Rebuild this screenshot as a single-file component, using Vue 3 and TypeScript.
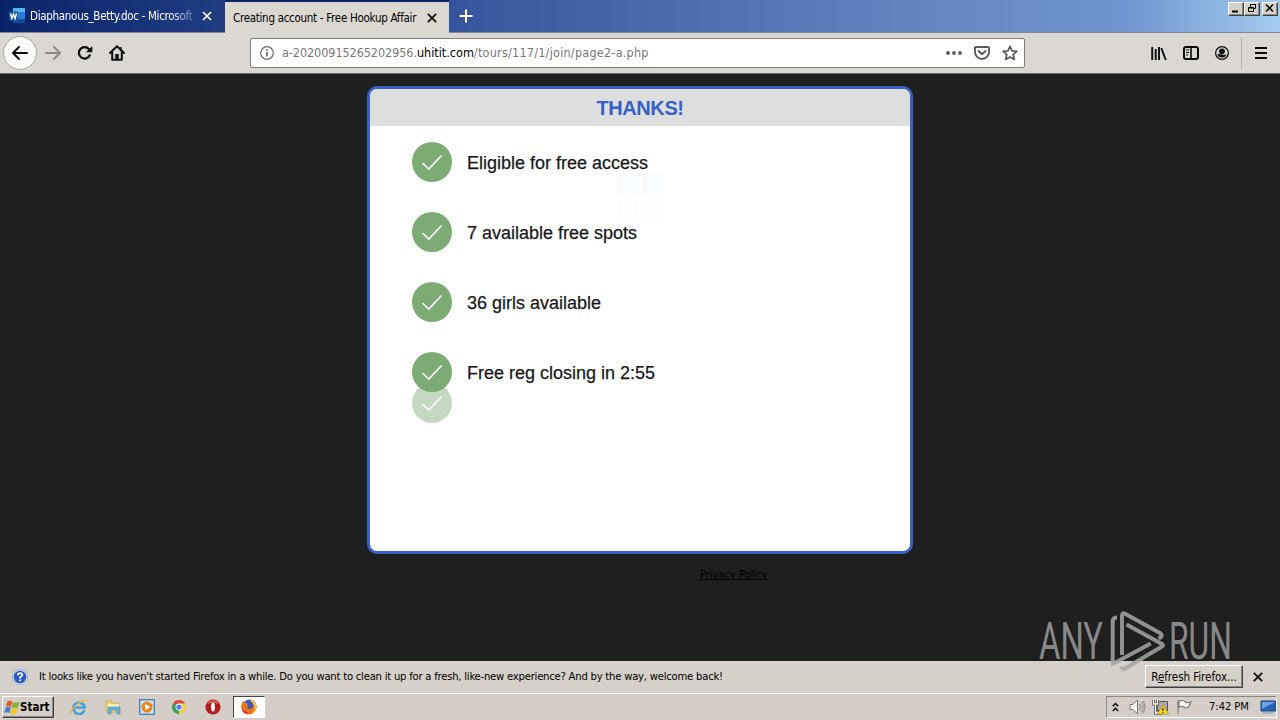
<script setup lang="ts">
interface Row { text: string }
const rows: Row[] = [
  { text: 'Eligible for free access' },
  { text: '7 available free spots' },
  { text: '36 girls available' },
  { text: 'Free reg closing in 2:55' },
]
</script>

<template>
  <div class="screen">
    <header class="tabs">
      <div class="tab inactive">
        <svg class="word" width="16" height="16" viewBox="0 0 16 16">
          <rect x="4" y="0" width="12" height="15" rx="1" fill="#2b7cd3" />
          <rect x="4" y="0" width="12" height="4" fill="#56b5ef" />
          <rect x="4" y="11" width="12" height="4" fill="#174a96" />
          <rect x="0" y="3.500" width="9" height="9" rx="1" fill="#1955a8" />
          <path d="M1.500 5.500l1.400 5L4.500 6l1.600 4.500L7.500 5.500" fill="none" stroke="#fff" stroke-width="1.400" />
        </svg>
        <span class="ui tab-title first">Diaphanous_Betty.doc - Microsoft</span>
        <svg class="x1" width="10" height="10" viewBox="0 0 10 10"><path d="M1 1l8 8M9 1L1 9" stroke="#fff" stroke-width="1.700" /></svg>
      </div>
      <div class="tab active">
        <span class="ui tab-title second">Creating account - Free Hookup Affair</span>
        <svg class="x2" width="10" height="10" viewBox="0 0 10 10"><path d="M.8 .8l8.400 8.400M9.200 .8L.8 9.200" stroke="#111" stroke-width="1.800" /></svg>
      </div>
      <svg class="plus" width="14" height="14" viewBox="0 0 14 14"><path d="M7 .5v13M.5 7h13" stroke="#fff" stroke-width="2" /></svg>
      <div class="win-buttons">
        <span class="wb"><svg width="13" height="11"><path d="M3 8.500h6" stroke="#000" stroke-width="2" /></svg></span>
        <span class="wb"><svg width="13" height="11"><path d="M5.500 4V1.500h5v4H9M5 1.500h6M3.500 4.500h5v4h-5zM3 5h6" fill="none" stroke="#000" /></svg></span>
        <span class="wb last"><svg width="13" height="11"><path d="M3 1.500l7 7M10 1.500l-7 7" stroke="#000" stroke-width="1.500" /></svg></span>
      </div>
    </header>

    <nav class="toolbar">
      <span class="back"><svg width="18" height="16" viewBox="0 0 18 16"><path d="M16 8H2M8 2L2 8l6 6" fill="none" stroke="#0c0c0d" stroke-width="2" stroke-linecap="round" stroke-linejoin="round" /></svg></span>
      <svg class="fwd" width="18" height="16" viewBox="0 0 18 16"><path d="M2 8h14M10 2l6 6-6 6" fill="none" stroke="#8c8a87" stroke-width="2" stroke-linecap="round" stroke-linejoin="round" /></svg>
      <svg class="reload" width="16" height="16" viewBox="0 0 16 16"><path d="M12.800 10.300A5.700 5.700 0 1 1 12 4.200" fill="none" stroke="#0c0c0d" stroke-width="2.200" stroke-linecap="round" /><path d="M15.300 1v6.200H9z" fill="#0c0c0d" /></svg>
      <svg class="home" width="16" height="16" viewBox="0 0 16 16"><path d="M1 8l7-6.800L15 8" fill="none" stroke="#0c0c0d" stroke-width="2" stroke-linecap="round" stroke-linejoin="round" /><path d="M3.200 7v7.800h9.600V7" fill="none" stroke="#0c0c0d" stroke-width="2" stroke-linejoin="round" /><path d="M6.300 15V9h3.400v6z" fill="#0c0c0d" /><path d="M12 2v3" stroke="#0c0c0d" stroke-width="1.500" /></svg>
      <div class="urlbar">
        <svg width="14" height="14" viewBox="0 0 14 14"><circle cx="7" cy="7" r="6.300" fill="none" stroke="#6b6b6b" stroke-width="1.200" /><path d="M7 6v4.500M7 3.300v1.500" stroke="#6b6b6b" stroke-width="1.700" /></svg>
        <span class="ui url"><span class="sub">a-20200915265202956.</span><b>uhitit.com</b><span class="path">/tours/117/1/join/page2-a.php</span></span>
        <svg class="dots" width="16" height="4" viewBox="0 0 16 4"><circle cx="2" cy="2" r="1.900" fill="#5b5b5e" /><circle cx="8" cy="2" r="1.900" fill="#5b5b5e" /><circle cx="14" cy="2" r="1.900" fill="#5b5b5e" /></svg>
        <svg class="pocket" width="16" height="14" viewBox="0 0 16 14"><path d="M2 1h12q1 0 1 1v4a7 7 0 0 1-14 0V2q0-1 1-1z" fill="none" stroke="#5b5b5e" stroke-width="1.900" /><path d="M4.500 5L8 8.300 11.500 5" fill="none" stroke="#5b5b5e" stroke-width="1.900" stroke-linecap="round" stroke-linejoin="round" /></svg>
        <svg class="star" width="16" height="16" viewBox="0 0 16 16"><path d="M8 1.300l2 4.500 4.900.5-3.700 3.300 1.100 4.900L8 12l-4.300 2.500 1.100-4.900L1.100 6.300 6 5.800z" fill="none" stroke="#5b5b5e" stroke-width="1.700" stroke-linejoin="round" /></svg>
      </div>
      <div class="tools">
        <svg width="16" height="15" viewBox="0 0 16 15"><path d="M1.200 1v13M4.700 3v11M8 1v13M10.300 2l4.500 12" fill="none" stroke="#0c0c0d" stroke-width="1.900" /></svg>
        <svg width="16" height="14" viewBox="0 0 16 14"><rect x="1" y="1" width="14" height="12" rx="2" fill="none" stroke="#0c0c0d" stroke-width="2" /><path d="M8 1v12" stroke="#0c0c0d" stroke-width="1.600" /><path d="M3 4h3M3 6.500h3M3 9h2" stroke="#0c0c0d" /></svg>
        <svg width="14" height="14" viewBox="0 0 14 14"><circle cx="7" cy="7" r="6.400" fill="none" stroke="#0c0c0d" stroke-width="1.200" /><circle cx="7" cy="5.300" r="2.900" fill="#0c0c0d" /><path d="M2.300 8.300Q5 7.500 7 8.500t4.700-.2A5 5 0 0 1 2.300 8.300z" fill="#0c0c0d" /></svg>
        <i class="sep"></i>
        <svg class="menu" width="12" height="12" viewBox="0 0 12 12"><path d="M0 1h12M0 6h12M0 11h12" stroke="#0c0c0d" stroke-width="2" /></svg>
      </div>
    </nav>

    <main class="page">
      <section class="card">
        <h1>THANKS!</h1>
        <ul>
          <li v-for="r in rows" :key="r.text">
            <svg class="check" width="40" height="40" viewBox="0 0 40 40"><circle cx="20" cy="20" r="20" fill="#7cab73" /><path d="M10.500 21l6.300 6L29.500 13.500" fill="none" stroke="#fff" stroke-width="1.700" /></svg>
            <span>{{ r.text }}</span>
          </li>
        </ul>
        <svg class="check incoming" width="40" height="40" viewBox="0 0 40 40"><circle cx="20" cy="20" r="20" fill="#c5d8c1" /><path d="M10.500 21l6.300 6L29.500 13.500" fill="none" stroke="#fff" stroke-width="1.700" /></svg>
        <div class="tiles"><i></i><i></i><i></i><i></i></div>
      </section>
      <a class="ui privacy">Privacy Policy</a>
    </main>

    <div class="notice">
      <svg width="16" height="16" viewBox="0 0 16 16"><circle cx="8" cy="8" r="7.700" fill="#d5e0f2" stroke="#8294b8" stroke-width=".6" /><circle cx="8" cy="8" r="6.300" fill="#2857bd" /><path d="M5.800 6.300Q6 4.200 8.100 4.200t2.200 1.900Q10.300 7.200 8.100 8.200v1.200M8.100 10.600v1.700" fill="none" stroke="#fff" stroke-width="1.700" /></svg>
      <span class="ui msg">It looks like you haven't started Firefox in a while. Do you want to clean it up for a fresh, like-new experience? And by the way, welcome back!</span>
      <button class="ui refresh"><span>R<u>e</u>fresh Firefox...</span></button>
      <svg class="nx" width="10" height="10" viewBox="0 0 10 10"><path d="M.8 .8l8.400 8.400M9.200 .8L.8 9.200" stroke="#111" stroke-width="1.800" /></svg>
    </div>

    <footer class="taskbar">
      <div class="start">
        <svg width="16" height="15" viewBox="0 0 16 15"><path d="M3.300 1.500Q6 0 8.300 1.500L7 7Q4.500 5.500 1.900 7z" fill="#e35b24" /><path d="M8.900 2q2.700 1.300 6.600 0L14 7.300q-3.300 1.200-6.400 0z" fill="#7cb63c" /><path d="M1.700 7.600Q4.200 6.200 6.800 7.600L5.500 13Q3 11.700.2 13z" fill="#3e82d2" /><path d="M7.400 7.900q2.900 1.300 6.400.2L12.400 13.400q-3.300 1.200-6.400 0z" fill="#f2c32c" /></svg>
        <b class="ui">Start</b>
      </div>
      <div class="launch">
        <svg width="18" height="16" viewBox="0 0 18 16"><path d="M14.500 11.200A5.700 5.700 0 1 1 14.700 8.500H5" fill="none" stroke="#43a4dc" stroke-width="2.700" /><path d="M1.500 15Q-1 12 7 5.500T17 2.500" fill="none" stroke="#e8bd3d" stroke-width="1.400" /></svg>
        <svg width="17" height="16" viewBox="0 0 17 16"><path d="M1 2h5l1 2h7v9H1z" fill="#edcf70" stroke="#c7a44a" stroke-width=".7" /><path d="M3 5h11v3H3z" fill="#fff0b0" /><path d="M3 15V9q0-1 1-1h10q1 0 1 1v6h-3v-4H6v4z" fill="#68b5dc" stroke="#398db9" stroke-width=".6" /></svg>
        <svg class="player" width="16" height="16" viewBox="0 0 16 16"><rect x=".5" y=".5" width="15" height="15" fill="#8cbde3" stroke="#4c84b6" /><rect x="2" y="2" width="12" height="12" fill="#d3e6f4" /><circle cx="8" cy="8" r="5.600" fill="#ef8418" /><path d="M6.200 4.700L11.300 8l-5.100 3.300z" fill="#fff" /></svg>
        <svg width="14" height="14" viewBox="0 0 14 14"><path d="M7 7L.9 3.500A7 7 0 0 1 13.100 3.500z" fill="#df4938" /><path d="M7 7h.2L7 14A7 7 0 0 1 .9 3.500z" fill="#3ca157" /><path d="M7 7V3.500h6.100A7 7 0 0 1 7 14z" fill="#f5cc3c" /><circle cx="7" cy="7" r="3.400" fill="#fff" /><circle cx="7" cy="7" r="2.600" fill="#4385ed" /></svg>
        <svg class="opera" width="16" height="16" viewBox="0 0 16 16"><circle cx="8" cy="8" r="7.600" fill="#b51b1c" /><path d="M2 5a7 7 0 0 1 12 0Q8 2 2 5z" fill="#e27669" /><ellipse cx="8" cy="8" rx="2.300" ry="5.200" fill="#fff" stroke="#741014" stroke-width=".8" /></svg>
      </div>
      <div class="ff">
        <svg width="16" height="16" viewBox="0 0 16 16"><circle cx="8.500" cy="7.300" r="6.800" fill="#335bc3" /><path d="M1 4l1.500-2 2 2 2-.3-.5 2 2 1-2 1.500q1 3 4 1.500 4-2 1-6.500L8.500.5Q15 1.500 15.700 7.500A7.700 7.700 0 0 1 .4 9Q0 6 1 4z" fill="#f17619" /><path d="M9 .5Q14.500 2 15.500 7.500 15 13 10 15q5-4 3.300-8.500Q11.500 4 9 .5z" fill="#ffc93c" /><path d="M.6 7Q2 13 8 13.300 4 17 1 11z" fill="#e5303e" /></svg>
      </div>
      <div class="tray">
        <svg class="chev" width="7" height="11" viewBox="0 0 7 11"><path d="M.8 4.300L3.500 1.500l2.700 2.800M.8 9L3.500 6.200 6.200 9" fill="none" stroke="#000" stroke-width="1.400" /></svg>
        <svg class="sound" width="17" height="16" viewBox="0 0 17 16"><path d="M1 5.500h3L8.500 1v14L4 10.500H1z" fill="#f5f5f5" stroke="#777" /><path d="M10.500 5q2 3 0 6M12.500 3q3.200 5 0 10M14.500 2q3 6 0 12" fill="none" stroke="#858585" /></svg>
        <svg class="net" width="17" height="16" viewBox="0 0 17 16"><rect x="5.500" y="2.500" width="10" height="9" fill="#aaa9a3" stroke="#555" /><path d="M1.500 1v4h4V1M3.500 5v9h7" fill="none" stroke="#555" stroke-width="3" /><path d="M1.500 1v4h4V1M3.500 5v9h7" fill="none" stroke="#fff" stroke-width="1.300" /><path d="M11 6l5.500 9h-11z" fill="#ffdc32" stroke="#b48c0b" stroke-width=".7" /><path d="M11 9v3M11 13v1" stroke="#222" stroke-width="1.200" /></svg>
        <svg class="flag" width="16" height="16" viewBox="0 0 16 16"><path d="M2 1.500v13M3 2q4-1.500 6.500 1 2 1.500 5.500 0l-2.500 5Q9 9.500 7.500 8T3 8z" fill="#f3f3f3" stroke="#777" stroke-width="1.100" /></svg>
        <span class="ui clock">7:42 PM</span>
        <svg width="16" height="14" viewBox="0 0 16 14"><path d="M1 1h14.500v10H1z" fill="#2463ba" stroke="#234779" /><path d="M2 2h13L2 9z" fill="#6da4e1" /><path d="M3 12.800h10" stroke="#9fb2c7" stroke-width="1.600" /></svg>
      </div>
    </footer>

    <svg class="brand" width="210" height="70" viewBox="0 0 210 70">
      <g fill="#a6a6a6" fill-opacity=".8">
        <text x="3" y="54" font-size="51" textLength="64" lengthAdjust="spacingAndGlyphs">ANY</text>
        <text x="133" y="54" font-size="51" textLength="63" lengthAdjust="spacingAndGlyphs">RUN</text>
      </g>
      <g fill="none" stroke="#a6a6a6" stroke-opacity=".85" stroke-width="4" stroke-linejoin="round">
        <path d="M81 12.500q-4.300 0-4.300 4V59l38-20.500" />
        <path d="M86 50V11q0-4 3.500-2L124 28q3 2 .5 4.500l-2 1" />
        <path d="M90.500 19.500L126 39q2 1 0 2.500L89 63.500q-3 1.500-3-2" />
      </g>
    </svg>
  </div>
</template>

<style>
body { margin: 0; overflow: hidden; }
</style>

<style scoped>
.screen { position: relative; width: 1280px; height: 720px; overflow: hidden; display: flex; flex-direction: column; background: #1f1f1f; font-family: "Liberation Sans", Arial, sans-serif; }
.screen * { box-sizing: border-box; }
svg { display: block; flex: none; }
.ui { font-family: "DejaVu Sans Condensed", "DejaVu Sans", sans-serif; font-stretch: condensed; font-size: 11px; white-space: nowrap; color: #000; line-height: 16px; }
.tabs { height: 33px; flex: none; display: flex; background: linear-gradient(90deg, #0a246a, #35549c 35%, #6283be 70%, #7095ce 88%, #a3caf1); border-bottom: 1px solid #85888d; }
.tab { display: flex; align-items: center; flex: none; }
.inactive { width: 225px; padding-left: 9px; }
.first { width: 164px; margin-left: 5px; overflow: hidden; color: #fff; font-size: 11.500px; letter-spacing: -.3px; -webkit-mask-image: linear-gradient(90deg, #000 85%, rgba(0, 0, 0, .25)); mask-image: linear-gradient(90deg, #000 85%, rgba(0, 0, 0, .25)); }
.x1 { margin-left: 8px; }
.active { width: 224px; height: 33px; background: #dbd8d1; border-top: 2px solid #0a246a; padding-left: 8px; }
.second { width: 186px; font-size: 11.500px; letter-spacing: -.29px; }
.x2 { margin-left: 8px; }
.plus { margin: 9px 0 0 10px; }
.win-buttons { margin: 2px 2px 0 auto; height: 14px; display: flex; }
.wb { width: 16px; height: 14px; background: #d6d2c9; border: 1px solid; border-color: #fff #404040 #404040 #fff; box-shadow: inset -1px -1px #888; }
.last { margin-left: 2px; }
.toolbar { height: 41px; flex: none; display: flex; align-items: center; background: #dbd8d3; border-bottom: 1px solid #77756f; }
.back { width: 34px; height: 34px; margin-left: 3px; border: 1px solid #aaa8a3; border-radius: 50%; background: #fafaf9; display: flex; align-items: center; justify-content: center; }
.fwd { margin-left: 7px; }
.reload { margin-left: 15px; }
.home { margin-left: 16px; }
.urlbar { width: 775px; height: 30px; margin-left: 125px; padding-left: 9px; display: flex; align-items: center; background: #fff; border: 1px solid #807e7b; border-radius: 2px; }
.url { width: 366px; margin-left: 8px; font-size: 12.500px; color: #777; }
.url b { font-weight: 400; color: #000; }
.sub { letter-spacing: -.06px; }
.path { letter-spacing: .24px; }
.dots { margin-left: 298px; }
.pocket { margin-left: 12px; }
.star { margin-left: 12px; }
.tools { margin-left: 126px; display: flex; align-items: center; gap: 16px; }
.sep { width: 1px; height: 32px; margin-left: -4px; background: #b6b3ae; }
.menu { margin-left: -3px; }
.page { height: 587px; flex: none; display: flex; flex-direction: column; padding-top: 12px; background: #1f1f1f; }
.card { position: relative; width: 546px; height: 468px; flex: none; margin-left: 367px; border: 3px solid #3863c4; border-radius: 10px; background: #fff; overflow: hidden; }
h1 { margin: 0; height: 37px; line-height: 38px; background: #dedede; text-align: center; font-size: 20px; letter-spacing: -.4px; font-weight: 700; color: #3561c6; }
ul { position: relative; z-index: 1; list-style: none; margin: 0; padding: 16px 0 0 42px; display: flex; flex-direction: column; gap: 30px; }
li { height: 40px; display: flex; align-items: center; gap: 15px; font-size: 18px; color: #181818; -webkit-text-stroke: .25px #181818; white-space: nowrap; }
li span { padding-top: 2px; }
.incoming { position: absolute; left: 42px; top: 294px; }
.tiles { position: absolute; left: 247px; top: 85px; display: grid; grid-template-columns: 22px 22px; gap: 3px; }
.tiles i { height: 21px; background: #fdfdfd; }
.tiles i:nth-child(-n+2) { background: #f9fcff; }
.privacy { margin: 14px 0 0 700px; align-self: flex-start; color: #000; text-decoration: underline; font-size: 11px; line-height: 14px; }
.notice { height: 32px; flex: none; display: flex; align-items: center; background: #d5d0c9; padding-left: 12px; }
.msg { width: 686px; margin-left: 11px; font-size: 11.200px; letter-spacing: -.23px; }
.refresh { width: 98px; height: 23px; margin: 0 0 1px 420px; padding: 0; text-align: center; font-size: 11.500px; background: #d6d1c9; border: 1px solid; border-color: #fff #404040 #404040 #fff; box-shadow: inset -1px -1px #888; letter-spacing: -.05px; }
.nx { margin-left: 10px; }
.taskbar { height: 27px; flex: none; display: flex; align-items: flex-start; background: #d5cdc7; border-top: 1px solid #fff; }
.start { margin: 2px 0 0 2px; width: 52px; height: 22px; display: flex; align-items: center; padding-left: 1px; border: 1px solid; border-color: #fff #404040 #404040 #fff; box-shadow: inset -1px -1px #888; }
.start .ui { font-size: 11.500px; }
.launch { margin: 5px 0 0 16px; display: flex; align-items: center; gap: 17px; }
.opera { margin-left: 2px; }
.ff { width: 32px; height: 22px; margin: 2px 0 0 12px; display: flex; align-items: center; justify-content: center; background: #fff; border: 1px solid; border-color: #444 #fff #fff #444; }
.tray { margin: 2px 3px 0 auto; width: 171px; height: 22px; display: flex; align-items: center; padding-left: 5px; border: 1px solid; border-color: #888 #fff #fff #888; }
.sound { margin-left: 10px; }
.net { margin-left: 6px; }
.flag { margin-left: 7px; }
.clock { margin-left: 17px; width: 40px; margin-right: 11px; }
.brand { position: absolute; left: 1036px; top: 605px; font-family: Roboto, sans-serif; font-weight: 400; }
</style>
